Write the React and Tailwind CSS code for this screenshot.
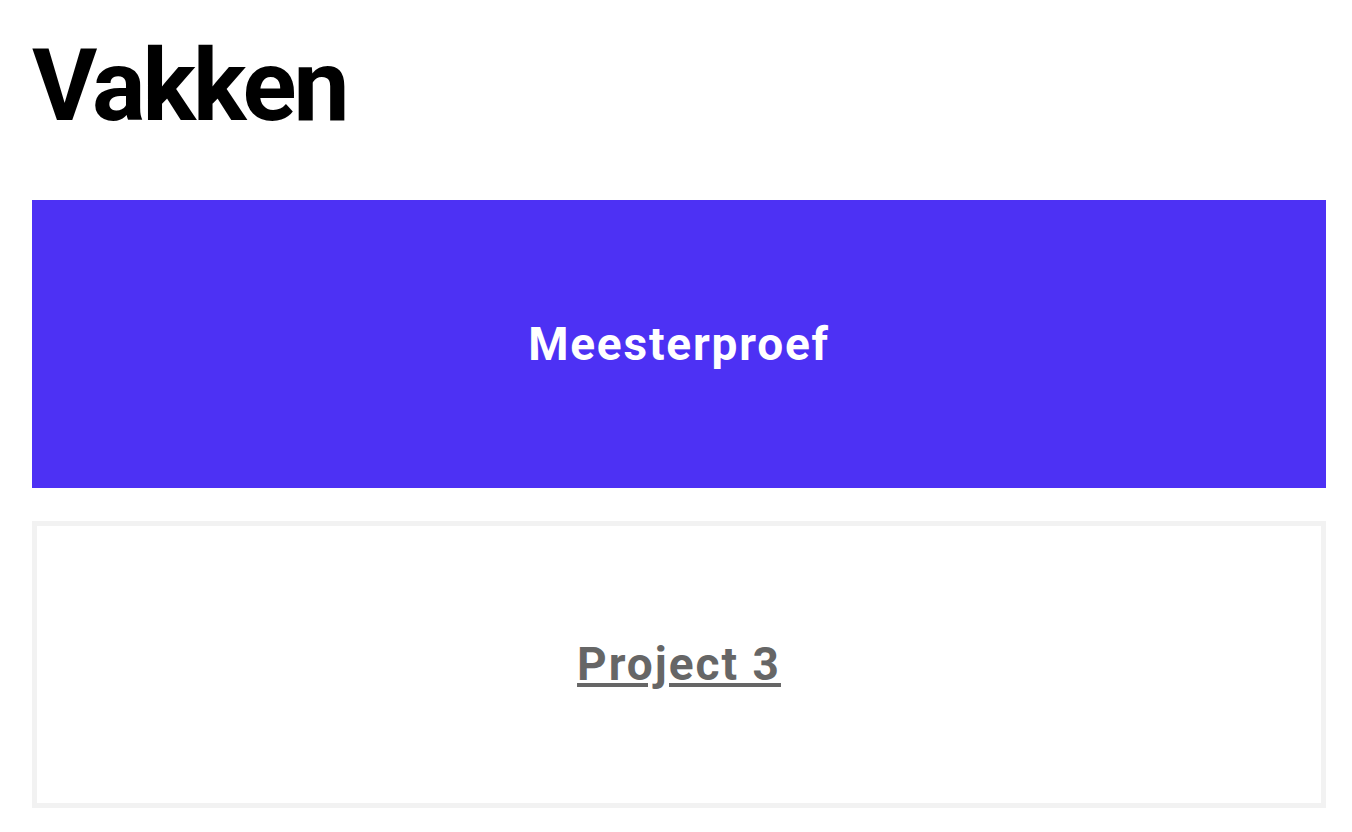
export default function App() {
  return (
    <div className="min-h-screen bg-white pl-8 pr-[26px] pt-[36px]" style={{ fontFamily: "Roboto, 'Liberation Sans', sans-serif" }}>
      <h1 className="text-[100px] leading-[100px] font-bold tracking-[-3px] text-black">Vakken</h1>
      <div className="mt-[64px] flex flex-col gap-[33px]">
        <div className="h-[288px] bg-[#4d31f4] flex items-center justify-center">
          <span className="text-[46px] font-bold tracking-[1.8px] text-white">Meesterproef</span>
        </div>
        <div className="h-[287px] border-[5px] border-[#f2f2f2] bg-white flex items-center justify-center">
          <a href="#" className="text-[46px] font-bold tracking-[2px] text-[#666666] underline">Project 3</a>
        </div>
      </div>
    </div>
  );
}
